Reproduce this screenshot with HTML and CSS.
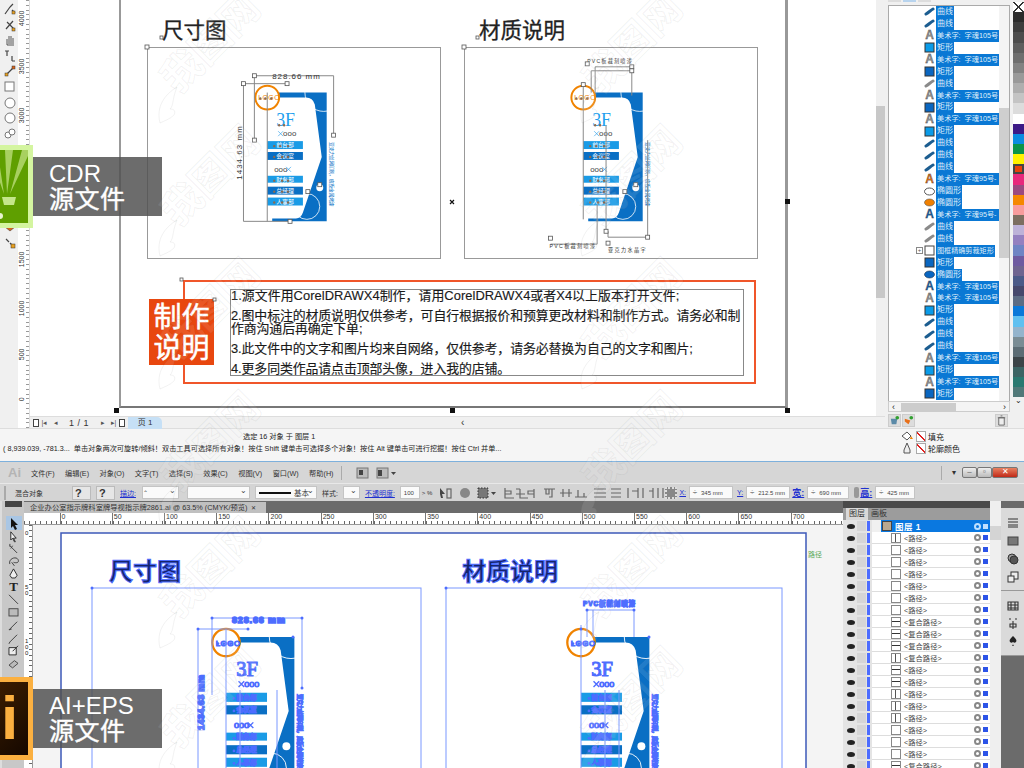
FILE: index.html
```html
<!DOCTYPE html>
<html lang="zh-CN">
<head>
    <meta charset="UTF-8">
    <title>CDR AI 源文件预览</title>
    <link rel="stylesheet" href="styles.css">
</head>
<body>
<svg class="defs" aria-hidden="true">
    <defs>
        <g id="sign">
            <path class="s-blue" d="M272 92H327V222H272V219H296Q301 219 303 213L322 157L315 104Q313 97 306 97H272Z"/>
            <circle class="s-arc" cx="324" cy="92" r="19"/>
            <circle class="s-arc" cx="307" cy="207" r="13"/>
            <circle class="s-dot" cx="320" cy="188" r="3.5"/>
            <circle class="s-ring" cx="267" cy="97" r="12"/>
            <rect class="s-light" x="267" y="141" width="36" height="8"/>
            <rect class="s-dark" x="267" y="152" width="36" height="8"/>
            <rect class="s-light" x="267" y="176" width="36" height="7"/>
            <rect class="s-dark" x="267" y="187" width="36" height="8"/>
            <rect class="s-light" x="267" y="198" width="36" height="8"/>
        </g>
        <g id="sign-text">
            <text class="s-logo" x="258" y="100">LOGO</text>
            <text class="s-3f" x="276" y="126">3F</text>
            <path class="s-x" d="M278 131l5 5m0-5l-5 5M286 167l5 5m0-5l-5 5"/>
            <text class="s-oo" x="283" y="136">ooo</text>
            <text class="s-oo" x="274" y="172">ooo</text>
            <text class="s-bar" x="285" y="147">前台部</text>
            <text class="s-bar" x="285" y="158">会议室</text>
            <text class="s-bar" x="285" y="182">财务部</text>
            <text class="s-bar" x="285" y="193">总经理</text>
            <text class="s-bar" x="285" y="204">人事部</text>
            <text class="s-col" transform="translate(330 142) rotate(90)" textLength="65">亚克力丝网印刷，底板金属烤漆</text>
        </g>
        <g id="sign-nodes">
            <circle cx="274" cy="146" r="1.2"/><circle cx="280" cy="146" r="1.2"/><circle cx="288" cy="146" r="1.2"/>
            <circle cx="274" cy="157" r="1.2"/><circle cx="282" cy="157" r="1.2"/><circle cx="288" cy="157" r="1.2"/>
            <circle cx="274" cy="181" r="1.2"/><circle cx="282" cy="181" r="1.2"/><circle cx="288" cy="181" r="1.2"/>
            <circle cx="274" cy="192" r="1.2"/><circle cx="282" cy="192" r="1.2"/><circle cx="288" cy="192" r="1.2"/>
            <circle cx="274" cy="203" r="1.2"/><circle cx="282" cy="203" r="1.2"/><circle cx="288" cy="203" r="1.2"/>
            <circle cx="260" cy="98" r="1.2"/><circle cx="265" cy="98" r="1.2"/><circle cx="271" cy="98" r="1.2"/>
            <circle cx="279" cy="125" r="1.2"/><circle cx="284" cy="125" r="1.2"/>
        </g>
        <g id="i-curve"><path d="M2 8C4 7 7 4 9 3"/></g>
        <g id="i-rect"><rect x="1" y="1" width="9" height="9"/></g>
        <g id="i-ellipse"><ellipse cx="5.5" cy="5.5" rx="5" ry="3.5"/></g>
        <g id="i-mark">
            <text class="wm-text" x="0" y="0" transform="rotate(-45)">我图网</text>
            <path class="wm-text" d="M-18 28C-22 12-14 0-1-8-6 4-4 10-8 14-4 14-2 16-4 20-8 24-14 26-18 28Z"/>
        </g>
    </defs>
</svg>

<div class="screen">
    <!-- CorelDRAW window -->
    <section class="cdr">
        <div class="cdr-main">
            <div class="toolbox">
                <svg class="tool" viewBox="0 0 14 14"><path d="M2 12L7 5M7 5l3-3M9 8l3 3" class="t-line"/><rect x="9" y="9" width="3" height="3" class="t-fill"/></svg>
                <svg class="tool" viewBox="0 0 14 14"><path d="M3 11L10 3M4 4l7 7" class="t-line"/><rect x="9" y="10" width="3" height="3" class="t-fill"/></svg>
                <svg class="tool" viewBox="0 0 14 14"><path d="M4 12V6M6 11V3M8 11V3M10 11V5M4 12h7" class="t-line thin"/></svg>
                <svg class="tool" viewBox="0 0 14 14"><path d="M2 2h4M4 2v5M9 7v5M9 12h3" class="t-line"/></svg>
                <svg class="tool" viewBox="0 0 14 14"><path d="M3 11L10 4" class="t-line"/><rect x="2" y="9" width="3" height="3" class="t-fill"/><rect x="9" y="2" width="3" height="3" class="t-red"/></svg>
                <svg class="tool" viewBox="0 0 14 14"><rect x="2" y="2" width="9" height="9" class="t-box"/></svg>
                <svg class="tool" viewBox="0 0 14 14"><circle cx="7" cy="7" r="5" class="t-box"/></svg>
                <svg class="tool" viewBox="0 0 14 14"><circle cx="7" cy="7" r="5" class="t-box"/></svg>
                <svg class="tool" viewBox="0 0 14 14"><circle cx="5" cy="8" r="3" class="t-box"/><circle cx="9" cy="5" r="3" class="t-box"/></svg>
                <div class="tool-gap"></div>
                <svg class="tool" viewBox="0 0 14 14"><path d="M7 3l5 4-5 4-5-4z" class="t-red"/></svg>
                <svg class="tool" viewBox="0 0 14 14"><path d="M3 3l3 3M7 7l4 4" class="t-line"/><rect x="8" y="8" width="4" height="4" class="t-fill"/></svg>
            </div>
            <div class="vruler">
                <span>4000</span><span>3500</span><span>3000</span><span></span><span></span><span>1500</span><span>1000</span><span>500</span><span>0</span>
            </div>
            <div class="center">
                <div class="work-row">
                    <div class="workspace">
                        <div class="page">
                            <div class="sheets">
                                <div class="sheet">
                                    <h3 class="sheet-title">尺寸图</h3>
                                    <div class="frame">
                                        <svg viewBox="147 47 294 212" width="292" height="210">
                                            <use href="#sign"/>
                                            <use href="#sign-text"/>
                                            <use href="#sign-nodes" class="nodes-cdr"/>
                                            <path class="guide" d="M254 140V75H334V135M243 222V83H287M243 222H290M267 92V222"/>
                                            <text class="dim" x="272" y="78" textLength="48">828.66 mm</text>
                                            <text class="dim" transform="translate(241 180) rotate(-90)" textLength="54">1434.63 mm</text>
                                            <g class="hd">
                                                <rect x="252" y="73" width="4" height="4"/><rect x="332" y="133" width="4" height="4"/><rect x="252" y="138" width="4" height="4"/>
                                                <rect x="241" y="81" width="4" height="4"/><rect x="285" y="81" width="4" height="4"/><rect x="288" y="220" width="4" height="4"/>
                                                <rect x="306" y="190" width="4" height="4"/><rect x="318" y="183" width="4" height="4"/>
                                            </g>
                                        </svg>
                                    </div>
                                </div>
                                <div class="sheet">
                                    <h3 class="sheet-title">材质说明</h3>
                                    <div class="frame">
                                        <svg viewBox="464 47 294 212" width="292" height="210">
                                            <use href="#sign" x="316"/>
                                            <use href="#sign-text" x="316"/>
                                            <use href="#sign-nodes" x="316" class="nodes-cdr"/>
                                            <path class="guide" d="M595 92V66H632V95M591 92V70H632M583 85V220M606 125V232M597 205V245H550M608 238H648V140M608 232V238"/>
                                            <text class="dim sm" x="587" y="62" textLength="45">PVC板裁刻喷漆</text>
                                            <text class="dim sm" x="549" y="249" textLength="46">PVC板裁刻喷漆</text>
                                            <text class="dim sm" x="608" y="253" textLength="38">亚克力水晶字</text>
                                            <g class="hd">
                                                <rect x="585" y="61" width="4" height="4"/><rect x="630" y="64" width="4" height="4"/><rect x="630" y="68" width="4" height="4"/>
                                                <rect x="581" y="82" width="4" height="4"/><rect x="548" y="237" width="4" height="4"/><rect x="604" y="230" width="4" height="4"/>
                                                <rect x="646" y="236" width="4" height="4"/><rect x="606" y="242" width="4" height="4"/><rect x="623" y="190" width="4" height="4"/><rect x="634" y="183" width="4" height="4"/>
                                            </g>
                                        </svg>
                                    </div>
                                </div>
                            </div>
                            <div class="note">
                                <div class="note-tag">制作<br>说明</div>
                                <div class="note-text">
                                    <p>1.源文件用CorelDRAWX4制作，请用CorelDRAWX4或者X4以上版本打开文件;</p>
                                    <p>2.图中标注的材质说明仅供参考，可自行根据报价和预算更改材料和制作方式。请务必和制<br>作商沟通后再确定下单;</p>
                                    <p>3.此文件中的文字和图片均来自网络，仅供参考，请务必替换为自己的文字和图片;</p>
                                    <p>4.更多同类作品请点击顶部头像，进入我的店铺。</p>
                                </div>
                            </div>
                        </div>
                        <svg class="marks" viewBox="30 0 846 417">
                            <rect class="m-black" x="114" y="408" width="5" height="5"/>
                            <rect class="m-black" x="450" y="408" width="5" height="5"/>
                            <rect class="m-black" x="785" y="408" width="5" height="5"/>
                            <rect class="m-black" x="785" y="199" width="5" height="5"/>
                            <path class="m-x" d="M450 200l4 4m0-4l-4 4"/>
                            <rect class="m-white" x="145" y="45" width="4" height="4"/>
                            <rect class="m-white" x="462" y="45" width="4" height="4"/>
                            <rect class="m-white" x="160" y="36" width="3" height="3"/>
                            <rect class="m-white" x="476" y="36" width="3" height="3"/>
                            <rect class="m-white" x="180" y="278" width="3" height="3"/>
                            <rect class="m-white" x="213" y="298" width="3" height="3"/>
                        </svg>
                    </div>
                    <div class="vscroll"><div class="vthumb"></div></div>
                </div>
                <div class="pagenav">
                    <span class="doc-ico"></span><span class="nav-g">|◂</span><span class="nav-g">◂</span>
                    <span class="page-num">1 / 1</span>
                    <span class="nav-g">▸</span><span class="nav-g">▸|</span><span class="doc-ico"></span>
                    <span class="page-tab">页 1</span>
                    <span class="nav-left">‹</span>
                </div>
            </div>
            <div class="docker">
                <div class="docker-top"><span></span><span class="on"></span><span></span></div>
                <div class="list-wrap">
                    <div class="objlist">
                        <div class="obj"><svg class="oi c-blue"><use href="#i-curve"/></svg><span class="lb">曲线</span></div>
                        <div class="obj"><svg class="oi c-blue"><use href="#i-curve"/></svg><span class="lb">曲线</span></div>
                        <div class="obj"><span class="oa">A</span><span class="lb long">美术字: 字魂105号</span></div>
                        <div class="obj"><svg class="oi r-light"><use href="#i-rect"/></svg><span class="lb">矩形</span></div>
                        <div class="obj"><span class="oa">A</span><span class="lb long">美术字: 字魂105号</span></div>
                        <div class="obj"><svg class="oi r-dark"><use href="#i-rect"/></svg><span class="lb">矩形</span></div>
                        <div class="obj"><svg class="oi c-gray"><use href="#i-curve"/></svg><span class="lb">曲线</span></div>
                        <div class="obj"><span class="oa">A</span><span class="lb long">美术字: 字魂105号</span></div>
                        <div class="obj"><svg class="oi r-dark"><use href="#i-rect"/></svg><span class="lb">矩形</span></div>
                        <div class="obj"><span class="oa">A</span><span class="lb long">美术字: 字魂105号</span></div>
                        <div class="obj"><svg class="oi r-light"><use href="#i-rect"/></svg><span class="lb">矩形</span></div>
                        <div class="obj"><svg class="oi c-blue"><use href="#i-curve"/></svg><span class="lb">曲线</span></div>
                        <div class="obj"><svg class="oi c-blue"><use href="#i-curve"/></svg><span class="lb">曲线</span></div>
                        <div class="obj"><svg class="oi c-blue"><use href="#i-curve"/></svg><span class="lb">曲线</span></div>
                        <div class="obj"><span class="oa a-orange">A</span><span class="lb long">美术字: 字魂95号-</span></div>
                        <div class="obj"><svg class="oi e-white"><use href="#i-ellipse"/></svg><span class="lb">椭圆形</span></div>
                        <div class="obj"><svg class="oi e-orange"><use href="#i-ellipse"/></svg><span class="lb">椭圆形</span></div>
                        <div class="obj"><span class="oa a-blue">A</span><span class="lb long">美术字: 字魂95号-</span></div>
                        <div class="obj"><svg class="oi c-gray"><use href="#i-curve"/></svg><span class="lb">曲线</span></div>
                        <div class="obj"><svg class="oi c-gray"><use href="#i-curve"/></svg><span class="lb">曲线</span></div>
                        <div class="obj"><span class="tree-box">+</span><svg class="oi r-white"><use href="#i-rect"/></svg><span class="lb clip">图框精确剪裁矩形</span></div>
                        <div class="obj"><svg class="oi r-dark"><use href="#i-rect"/></svg><span class="lb">矩形</span></div>
                        <div class="obj"><svg class="oi e-blue"><use href="#i-ellipse"/></svg><span class="lb">椭圆形</span></div>
                        <div class="obj"><span class="oa a-blue">A</span><span class="lb long">美术字: 字魂105号</span></div>
                        <div class="obj"><span class="oa">A</span><span class="lb long">美术字: 字魂105号</span></div>
                        <div class="obj"><svg class="oi r-light"><use href="#i-rect"/></svg><span class="lb">矩形</span></div>
                        <div class="obj"><svg class="oi c-blue"><use href="#i-curve"/></svg><span class="lb">曲线</span></div>
                        <div class="obj"><svg class="oi c-blue"><use href="#i-curve"/></svg><span class="lb">曲线</span></div>
                        <div class="obj"><svg class="oi c-blue"><use href="#i-curve"/></svg><span class="lb">曲线</span></div>
                        <div class="obj"><span class="oa">A</span><span class="lb long">美术字: 字魂105号</span></div>
                        <div class="obj"><svg class="oi r-light"><use href="#i-rect"/></svg><span class="lb">矩形</span></div>
                        <div class="obj"><span class="oa">A</span><span class="lb long">美术字: 字魂105号</span></div>
                        <div class="obj"><svg class="oi r-dark"><use href="#i-rect"/></svg><span class="lb">矩形</span></div>
                    </div>
                    <div class="list-scroll"><div class="list-thumb"></div></div>
                </div>
                <div class="list-hscroll"><span>‹</span><div class="list-hthumb"></div><span>›</span></div>
                <div class="docker-btns">
                    <span class="d-btn"><svg viewBox="0 0 12 12"><path class="b-layer" d="M2 4h7l-1 6H3z"/><circle class="b-green" cx="9" cy="3" r="2"/></svg></span>
                    <span class="d-btn"><svg viewBox="0 0 12 12"><path class="b-orange" d="M2 4l6 2-2 4-4-3z"/><circle class="b-green" cx="9" cy="3" r="2"/></svg></span>
                    <span class="d-btn trash"><svg viewBox="0 0 12 12"><path class="b-trash" d="M3 3h6v8H3zM2 3h8M5 1h2"/></svg></span>
                </div>
            </div>
            <div class="palette">
                <div class="sw no"></div>
                <div class="sw"></div><div class="sw"></div><div class="sw"></div><div class="sw"></div><div class="sw"></div><div class="sw"></div><div class="sw"></div><div class="sw"></div><div class="sw"></div><div class="sw"></div>
                <div class="sw"></div><div class="sw"></div><div class="sw"></div><div class="sw"></div><div class="sw"></div><div class="sw"></div><div class="sw"></div><div class="sw"></div><div class="sw"></div><div class="sw"></div>
                <div class="sw"></div><div class="sw"></div><div class="sw"></div><div class="sw"></div><div class="sw"></div><div class="sw"></div><div class="sw"></div><div class="sw"></div><div class="sw"></div><div class="sw"></div>
                <div class="sw"></div><div class="sw"></div><div class="sw"></div><div class="sw"></div><div class="sw"></div><div class="sw"></div><div class="sw"></div><div class="sw"></div>
                <div class="pal-arrow">⌄</div>
            </div>
        </div>
        <div class="cdr-status">
            <div class="status-text">
                <div class="st-sel">选定 16 对象 于 图层 1</div>
                <div class="st-long">( 8,939.039, -781.3...&nbsp; 单击对象两次可旋转/倾斜！双击工具可选择所有对象！按住 Shift 键单击可选择多个对象！按住 Alt 键单击可进行挖掘！按住 Ctrl 并单...</div>
            </div>
            <div class="fill-info">
                <div class="fi-row"><svg class="fi-ico" viewBox="0 0 14 12"><path class="fi-b" d="M2 6l5-4 4 4-4 4z"/><path class="fi-o" d="M11 6l2 3h-3z"/></svg><span class="none-box"></span><span>填充</span></div>
                <div class="fi-row"><svg class="fi-ico" viewBox="0 0 14 12"><path class="fi-p" d="M7 1l3 7v3H4V8z"/></svg><span class="none-box"></span><span>轮廓颜色</span></div>
            </div>
        </div>
    </section>

    <!-- Illustrator window -->
    <section class="ai">
        <div class="ai-menu">
            <span class="ai-mark">Ai</span>
            <nav class="menu-items">
                <span>文件(F)</span><span>编辑(E)</span><span>对象(O)</span><span>文字(T)</span><span>选择(S)</span><span>效果(C)</span><span>视图(V)</span><span>窗口(W)</span><span>帮助(H)</span>
            </nav>
            <i class="sep"></i>
            <svg class="menu-ico" viewBox="0 0 14 12"><rect x="1" y="1" width="11" height="10" class="mi-box"/><rect x="3" y="3" width="4" height="5" class="mi-dark"/></svg>
            <svg class="menu-ico arrange" viewBox="0 0 20 12"><rect x="1" y="1" width="11" height="10" class="mi-box"/><rect x="2" y="3" width="4" height="6" class="mi-dark"/><path class="mi-dark" d="M15 5h5l-2.500 3z"/></svg>
            <i class="sep right"></i>
            <span class="win-tri">▾</span>
            <div class="win-btns"><span class="wb">–</span><span class="wb">▫</span><span class="wb close">✕</span></div>
        </div>
        <div class="ai-ctrl">
            <span class="grip"></span>
            <span class="c-lab first">混合对象</span>
            <span class="dd q">?</span><span class="dd q">?</span>
            <span class="c-link">描边:</span>
            <span class="c-field w37">⌃<b>⌄</b></span>
            <span class="c-field w63"><b>⌄</b></span>
            <span class="c-field w62"><i class="stroke-line"></i><em>基本</em><b>⌄</b></span>
            <span class="c-lab">样式:</span>
            <span class="c-field w17"><b>⌄</b></span>
            <span class="c-link">不透明度:</span>
            <span class="c-field w20 num">100</span><span class="c-lab small">&gt; %</span>
            <svg class="ctrl-icons" viewBox="0 0 65 14">
                <path class="ci-dark" d="M3 2l5 6-3 0 1 4-2 0-1-4z"/><rect class="ci-line" x="10" y="3" width="4" height="9"/>
                <circle class="ci-gray" cx="28" cy="7" r="5"/>
                <rect class="ci-dots" x="41" y="2" width="10" height="10"/><path class="ci-dark" d="M54 6h5l-2.500 3z"/>
            </svg>
            <svg class="align-icons" viewBox="0 0 162 14">
                <path class="ci-line" d="M3 2v10h9M3 5h6v3H3M14 3h4M18 3v9h8M14 8h9M32 3v9M32 5h-6v3h6M42 3h11M47 3v5h-3v-5M50 3v8h-3M58 7h12M61 3v8M67 3v8M73 11h12M76 4v7M82 7v4M92 3h12M92 7h12M92 11h12M109 3h10M109 7h10M109 11h10M126 2v10M130 5h6M136 2v10M141 2v10M147 5h4M151 2v10M156 2v10M161 2v10"/>
            </svg>
            <span class="refpt"></span>
            <span class="c-link xy">X:</span><span class="c-field w44"><u>÷</u>345 mm</span>
            <span class="c-link xy">Y:</span><span class="c-field w44"><u>÷</u>212.5 mm</span>
            <span class="c-link big">宽:</span><span class="c-field w42"><u>÷</u>690 mm</span>
            <span class="c-chain"></span>
            <span class="c-link big last">高:</span><span class="c-field w40"><u>÷</u>425 mm</span>
        </div>
        <div class="ai-body">
            <div class="ai-tools">
                <div class="ai-grip"></div>
                <svg class="at sel" viewBox="0 0 14 14"><path class="at-k" d="M4 2l7 7-3 0 2 4-2 1-2-4-2 2z"/></svg>
                <svg class="at" viewBox="0 0 14 14"><path class="at-o" d="M4 2l6 7-3 0 2 4-1 0-2-4-2 2z"/></svg>
                <svg class="at" viewBox="0 0 14 14"><path class="at-l" d="M3 3l8 8M4 6l2-3M3 1v3"/></svg>
                <svg class="at" viewBox="0 0 14 14"><path class="at-l" d="M3 10C1 4 10 1 12 5S9 9 7 8M5 8l3 4"/></svg>
                <svg class="at" viewBox="0 0 14 14"><path class="at-o" d="M7 1l4 7-2 3H5L3 8z"/></svg>
                <span class="at at-t">T</span>
                <svg class="at" viewBox="0 0 14 14"><path class="at-l" d="M2 2l10 10"/></svg>
                <svg class="at" viewBox="0 0 14 14"><rect class="at-g" x="2" y="3" width="10" height="8"/></svg>
                <svg class="at" viewBox="0 0 14 14"><path class="at-l" d="M2 12L11 3M2 12l3-1"/></svg>
                <svg class="at" viewBox="0 0 14 14"><path class="at-l" d="M3 11L11 3M3 11l-1 2"/></svg>
                <svg class="at" viewBox="0 0 14 14"><path class="at-o" d="M2 4h8v8H2zM6 8l6-6"/></svg>
                <svg class="at" viewBox="0 0 14 14"><path class="at-g" d="M2 9l6-5 4 3-6 5z"/></svg>
            </div>
            <div class="ai-doc">
                <div class="ai-tabbar"><div class="ai-tab">企业办公室指示牌科室牌导视指示牌2861.ai @ 63.5% (CMYK/预览)<i>✕</i></div></div>
                <div class="ai-hruler">
                    <div class="hr-pad"></div>
                    <span>0</span><span>50</span><span>100</span><span>150</span><span>200</span><span>250</span><span>300</span><span>350</span><span>400</span><span>450</span><span>500</span><span>550</span><span>600</span><span>650</span><span>700</span>
                </div>
                <div class="ai-work">
                    <div class="ai-vruler"><span>0</span><span>5<br>0</span><span>1<br>0<br>0</span></div>
                    <svg class="ai-canvas" viewBox="33 525 809 243" width="809" height="243">
                        <rect class="ai-page" x="61" y="533" width="745" height="260"/>
                        <rect class="ai-frame" x="92" y="588" width="329" height="200"/>
                        <rect class="ai-frame" x="446" y="588" width="336" height="200"/>
                        <text class="ai-title" x="109" y="580">尺寸图</text>
                        <text class="ai-title" x="462" y="580">材质说明</text>
                        <text class="ai-green" x="808" y="557">路径</text>

                        <g class="txt-ai" transform="translate(-78.400 532) scale(1.14)">
                            <use href="#sign"/>
                            <use href="#sign-text"/>
                            <use href="#sign-nodes" class="nodes-ai"/>
                        </g>
                        <path class="ai-guide" d="M198 768V629H248M212 695V618H302V688M226 629V768M240 690V768M277 690V768"/>
                        <text class="ai-dim" x="232" y="623" textLength="53">828.66 mm</text>
                        <text class="ai-dim" transform="translate(204 730) rotate(-90)" textLength="55">1434.63 mm</text>
                        <g class="ai-pts">
                            <circle cx="92" cy="588" r="1.500"/><circle cx="446" cy="588" r="1.500"/><circle cx="212" cy="618" r="1.500"/><circle cx="302" cy="618" r="1.500"/>
                            <circle cx="198" cy="629" r="1.500"/><circle cx="248" cy="629" r="1.500"/><circle cx="293" cy="637" r="1.500"/><circle cx="302" cy="688" r="1.500"/>
                        </g>

                        <g class="txt-ai" transform="translate(276.600 532) scale(1.14)">
                            <use href="#sign"/>
                            <use href="#sign-text"/>
                            <use href="#sign-nodes" class="nodes-ai"/>
                        </g>
                        <path class="ai-guide" d="M587 637V610H634V637M593 637V610M581 625V768M605 690V768M619 690V768"/>
                        <text class="ai-dim sm" x="583" y="606" textLength="52">PVC板裁刻喷漆</text>
                        <g class="ai-pts">
                            <circle cx="581" cy="629" r="1.500"/><circle cx="649" cy="637" r="1.500"/><circle cx="634" cy="610" r="1.500"/><circle cx="587" cy="610" r="1.500"/>
                        </g>
                    </svg>
                </div>
            </div>
            <div class="ai-panel">
                <div class="panel-head"></div>
                <div class="panel-tabs"><span class="on">图层</span><span>画板</span></div>
                <div class="layers">
                    <div class="lrow top"><i class="eye"></i><i class="vbox"></i><i class="vbar"></i><div class="lcell"><div class="ltop"><i class="thumb pic"></i>图层 1<i class="tgt white"></i><i class="sq white"></i></div></div></div>
                    <div class="lrow"><i class="eye"></i><i class="vbox"></i><i class="vbar"></i><div class="lcell"><i class="thumb v"></i><span>&lt;路径&gt;</span><i class="tgt"></i><i class="sq"></i></div></div>
                    <div class="lrow"><i class="eye"></i><i class="vbox"></i><i class="vbar"></i><div class="lcell"><i class="thumb"></i><span>&lt;路径&gt;</span><i class="tgt"></i><i class="sq"></i></div></div>
                    <div class="lrow"><i class="eye"></i><i class="vbox"></i><i class="vbar"></i><div class="lcell"><i class="thumb"></i><span>&lt;路径&gt;</span><i class="tgt"></i><i class="sq"></i></div></div>
                    <div class="lrow"><i class="eye"></i><i class="vbox"></i><i class="vbar"></i><div class="lcell"><i class="thumb"></i><span>&lt;路径&gt;</span><i class="tgt"></i><i class="sq"></i></div></div>
                    <div class="lrow"><i class="eye"></i><i class="vbox"></i><i class="vbar"></i><div class="lcell"><i class="thumb"></i><span>&lt;路径&gt;</span><i class="tgt"></i><i class="sq"></i></div></div>
                    <div class="lrow"><i class="eye"></i><i class="vbox"></i><i class="vbar"></i><div class="lcell"><i class="thumb"></i><span>&lt;路径&gt;</span><i class="tgt"></i><i class="sq"></i></div></div>
                    <div class="lrow"><i class="eye"></i><i class="vbox"></i><i class="vbar"></i><div class="lcell"><i class="thumb"></i><span>&lt;路径&gt;</span><i class="tgt"></i><i class="sq"></i></div></div>
                    <div class="lrow"><i class="eye"></i><i class="vbox"></i><i class="vbar"></i><div class="lcell"><i class="thumb h"></i><span>&lt;复合路径&gt;</span><i class="tgt"></i><i class="sq"></i></div></div>
                    <div class="lrow"><i class="eye"></i><i class="vbox"></i><i class="vbar"></i><div class="lcell"><i class="thumb h"></i><span>&lt;复合路径&gt;</span><i class="tgt"></i><i class="sq"></i></div></div>
                    <div class="lrow"><i class="eye"></i><i class="vbox"></i><i class="vbar"></i><div class="lcell"><i class="thumb h"></i><span>&lt;复合路径&gt;</span><i class="tgt"></i><i class="sq"></i></div></div>
                    <div class="lrow"><i class="eye"></i><i class="vbox"></i><i class="vbar"></i><div class="lcell"><i class="thumb v"></i><span>&lt;复合路径&gt;</span><i class="tgt"></i><i class="sq"></i></div></div>
                    <div class="lrow"><i class="eye"></i><i class="vbox"></i><i class="vbar"></i><div class="lcell"><i class="thumb h"></i><span>&lt;路径&gt;</span><i class="tgt"></i><i class="sq"></i></div></div>
                    <div class="lrow"><i class="eye"></i><i class="vbox"></i><i class="vbar"></i><div class="lcell"><i class="thumb h"></i><span>&lt;路径&gt;</span><i class="tgt"></i><i class="sq"></i></div></div>
                    <div class="lrow"><i class="eye"></i><i class="vbox"></i><i class="vbar"></i><div class="lcell"><i class="thumb v"></i><span>&lt;路径&gt;</span><i class="tgt"></i><i class="sq"></i></div></div>
                    <div class="lrow"><i class="eye"></i><i class="vbox"></i><i class="vbar"></i><div class="lcell"><i class="thumb v"></i><span>&lt;路径&gt;</span><i class="tgt"></i><i class="sq"></i></div></div>
                    <div class="lrow"><i class="eye"></i><i class="vbox"></i><i class="vbar"></i><div class="lcell"><i class="thumb v"></i><span>&lt;路径&gt;</span><i class="tgt"></i><i class="sq"></i></div></div>
                    <div class="lrow"><i class="eye"></i><i class="vbox"></i><i class="vbar"></i><div class="lcell"><i class="thumb"></i><span>&lt;路径&gt;</span><i class="tgt"></i><i class="sq"></i></div></div>
                    <div class="lrow"><i class="eye"></i><i class="vbox"></i><i class="vbar"></i><div class="lcell"><i class="thumb"></i><span>&lt;路径&gt;</span><i class="tgt"></i><i class="sq"></i></div></div>
                    <div class="lrow"><i class="eye"></i><i class="vbox"></i><i class="vbar"></i><div class="lcell"><i class="thumb"></i><span>&lt;路径&gt;</span><i class="tgt"></i><i class="sq"></i></div></div>
                    <div class="lrow"><i class="eye"></i><i class="vbox"></i><i class="vbar"></i><div class="lcell"><i class="thumb h"></i><span>&lt;复合路径&gt;</span><i class="tgt"></i><i class="sq"></i></div></div>
                </div>
            </div>
            <div class="ai-lscroll"><div class="ai-lthumb"></div></div>
            <div class="ai-strip">
                <div class="strip-group">
                    <svg viewBox="0 0 14 14"><path class="st-l" d="M2 3h10M2 6h10M2 9h10M2 11h10"/></svg>
                    <svg viewBox="0 0 14 14"><rect class="st-grad" x="2" y="3" width="10" height="8"/></svg>
                    <svg viewBox="0 0 14 14"><circle class="st-c" cx="6" cy="6" r="4"/><circle class="st-c2" cx="8" cy="8" r="4"/></svg>
                    <svg viewBox="0 0 14 14"><rect class="st-w" x="5" y="2" width="7" height="7"/><rect class="st-w" x="2" y="6" width="6" height="6"/></svg>
                </div>
                <div class="strip-group">
                    <svg viewBox="0 0 14 14"><path class="st-l" d="M2 3h10v8H2zM2 6h10M2 9h10M5 3v8M9 3v8"/></svg>
                    <svg viewBox="0 0 14 14"><path class="st-l" d="M3 2h2M9 2h2M7 4v8M4 7h6v3H4z"/></svg>
                    <svg viewBox="0 0 14 14"><path class="st-k" d="M7 1c3 3 4 4 3 6-1 1-2 1-3 0 0 2 0 3 1 4H6c1-1 1-2 1-4-1 1-2 1-3 0-1-2 0-3 3-6z"/></svg>
                </div>
            </div>
        </div>
    </section>

    <!-- preview badges over the screenshots -->
    <div class="badge badge-cdr">
        <div class="b-logo logo-cdr">
            <svg viewBox="0 0 28 73" width="28" height="73">
                <path class="ray" d="M4 44L-10 4H-2ZM7 44L5 0H13ZM10 44L22 0H28V6Z"/>
                <path class="ray-b" d="M2 47H16L14 55H4Z"/>
                <circle class="ray-w" cx="0" cy="66" r="3"/>
            </svg>
        </div>
        <div class="b-label"><strong>CDR</strong><span>源文件</span></div>
    </div>
    <div class="badge badge-ai">
        <div class="b-logo logo-ai">i</div>
        <div class="b-label"><strong>AI+EPS</strong><span>源文件</span></div>
    </div>

    <svg class="watermarks" viewBox="0 0 1024 768">
        <use href="#i-mark" x="178" y="95"/><use href="#i-mark" x="600" y="95"/>
        <use href="#i-mark" x="178" y="228"/><use href="#i-mark" x="600" y="228"/>
        <use href="#i-mark" x="178" y="361"/><use href="#i-mark" x="600" y="361"/>
        <use href="#i-mark" x="178" y="494"/><use href="#i-mark" x="600" y="494"/>
        <use href="#i-mark" x="178" y="620"/><use href="#i-mark" x="600" y="620"/>
        <use href="#i-mark" x="178" y="750"/><use href="#i-mark" x="600" y="750"/>
    </svg>
</div>
</body>
</html>
```
FILE: styles.css
```css
* {
    box-sizing: border-box;
}
html, body {
    margin: 0;
    padding: 0;
    background: #fff;
}
body {
    font-family: "Liberation Sans", "Noto Sans CJK SC", sans-serif;
    color: #222;
}
.defs {
    position: absolute;
    width: 0;
    height: 0;
}
.screen {
    position: relative;
    width: 1024px;
    height: 768px;
    overflow: hidden;
}

/* ---------- CorelDRAW ---------- */
.cdr {
    height: 461px;
    background: #f2f2f2;
}
.cdr-main {
    display: flex;
    height: 428px;
}
.toolbox {
    width: 18px;
    padding: 2px 0 0 3px;
    display: flex;
    flex-direction: column;
    background: #f0f0f0;
}
.tool {
    width: 14px;
    height: 14px;
    margin-bottom: 1.6px;
    flex: none;
}
.tool-gap {
    height: 78px;
    flex: none;
}
.t-line { fill: none; stroke: #444; stroke-width: 1.2; }
.t-line.thin { stroke-width: .9; }
.t-fill { fill: #e8a020; stroke: #333; stroke-width: .5; }
.t-red { fill: #d8641a; stroke: #333; stroke-width: .5; }
.t-box { fill: #fff; stroke: #777; stroke-width: 1; }

.vruler {
    width: 12px;
    padding-top: 11px;
    background: #fff repeating-linear-gradient(to bottom, #999 0 1px, transparent 1px 4.8px) right top / 3px 100% no-repeat;
    border-right: 1px solid #ddd;
    overflow: hidden;
}
.vruler span {
    display: block;
    height: 48.25px;
    writing-mode: vertical-rl;
    transform: rotate(180deg);
    font-size: 7px;
    line-height: 8px;
    color: #333;
    text-align: right;
}
.center {
    width: 855px;
    display: flex;
    flex-direction: column;
}
.work-row {
    display: flex;
    height: 416px;
}
.workspace {
    position: relative;
    width: 846px;
    background: #fff;
    overflow: hidden;
}
.page {
    width: 669px;
    height: 408px;
    margin-left: 89px;
    padding: 20px 0 0 26px;
    background: #fff;
    border-left: 2px solid #999;
    border-right: 3px solid #999;
    border-bottom: 2px solid #777;
}
.sheets {
    display: grid;
    grid-template-columns: 294px 294px;
    column-gap: 23px;
}
.sheet-title {
    margin: 0 0 0 15px;
    height: 27px;
    font-weight: normal;
    font-size: 21.500px;
    line-height: 22px;
    color: #222;
    -webkit-text-stroke: .3px #222;
}
.frame {
    width: 294px;
    height: 212px;
    border: 1px solid #999;
}
.frame svg {
    display: block;
}
.s-blue { fill: #0a6fc4; }
.s-arc { fill: none; stroke: #fff; stroke-width: .8; }
.s-dot { fill: #fff; }
.s-ring { fill: #fff; stroke: #f08300; stroke-width: 2; }
.s-light { fill: #1a9be6; }
.s-dark { fill: #0a6fc4; }
/* the Illustrator copy of the sign swaps these to selection blue */
.s-logo { font-size: 7px; fill: var(--tf, #f08300); stroke: var(--ts, none); stroke-width: var(--sw, 0); letter-spacing: .4px; }
.s-3f { font-family: "Liberation Serif", serif; font-size: 18px; fill: var(--tf, #1ea0ee); stroke: var(--ts, none); stroke-width: var(--sw, 0); }
.s-x { fill: none; stroke: var(--ts, #3aa4ea); stroke-width: var(--swx, .7); }
.s-oo { font-size: 8px; fill: var(--tf, #444); stroke: var(--ts, none); stroke-width: var(--sw, 0); }
.s-bar { font-size: 6px; fill: var(--tf, #fff); stroke: var(--ts, none); stroke-width: var(--sw, 0); text-anchor: middle; }
.s-col { font-size: 5px; fill: var(--tf, #0a6fc4); stroke: var(--ts, none); stroke-width: var(--sw, 0); }
.guide { fill: none; stroke: #888; stroke-width: 1; }
.dim { font-size: 8px; fill: #333; }
.dim.sm { font-size: 5.200px; }
.hd rect { fill: #fff; stroke: #555; stroke-width: .8; }
.nodes-cdr { fill: #8a6a50; }

.note {
    position: relative;
    width: 573px;
    height: 104px;
    margin: 21px 0 0 36px;
    padding: 7px 0 0 45px;
    border: 2px solid #f0562a;
}
.note-tag {
    position: absolute;
    left: -36px;
    top: 17px;
    width: 65px;
    height: 66px;
    background: #e8470f;
    color: #fff;
    font-size: 28px;
    line-height: 31px;
    text-align: center;
    padding-top: 3px;
    -webkit-text-stroke: .5px #fff;
}
.note-text {
    width: 514px;
    height: 87px;
    border: 1px solid #888;
    font-size: 12.900px;
    line-height: 13px;
    white-space: nowrap;
    letter-spacing: -.1px;
    color: #1a1a1a;
    -webkit-text-stroke: .15px #1a1a1a;
    overflow: hidden;
}
.note-text p {
    margin: 0 0 7px;
}
.note-text p:first-child {
    margin-top: -1px;
    letter-spacing: .05px;
}
.marks {
    position: absolute;
    left: 0;
    top: 0;
    width: 846px;
    height: 417px;
}
.m-black { fill: #111; }
.m-white { fill: #fff; stroke: #555; stroke-width: .8; }
.m-x { fill: none; stroke: #111; stroke-width: 1.2; }
.vscroll {
    width: 9px;
    background: #f0f0f0;
    padding-top: 106px;
}
.vthumb {
    height: 192px;
    background: #c8c8c8;
}
.pagenav {
    height: 12px;
    display: flex;
    align-items: center;
    background: #f0f0f0;
    font-size: 8px;
    color: #333;
    padding-left: 3px;
    border-top: 1px solid #ddd;
}
.doc-ico {
    width: 6px;
    height: 8px;
    border: 1px solid #444;
    background: #fff;
    flex: none;
}
.nav-g {
    width: 11px;
    text-align: center;
    font-size: 7px;
    color: #555;
    flex: none;
}
.page-num {
    width: 36px;
    text-align: center;
    font-size: 9px;
    letter-spacing: .5px;
}
.page-tab {
    width: 34px;
    height: 12px;
    margin-left: 3px;
    background: #c6e0f6;
    text-align: center;
    font-size: 8px;
    line-height: 11px;
    border-radius: 0 5px 0 0;
}
.nav-left {
    margin-left: 299px;
    font-size: 10px;
    line-height: 10px;
}
.docker {
    width: 128px;
    padding-left: 3px;
    background: #f0f0f0;
    display: flex;
    flex-direction: column;
}
.docker-top {
    height: 5px;
    display: flex;
    gap: 2px;
    overflow: hidden;
}
.docker-top span {
    width: 13px;
    height: 2px;
    background: #ddd;
}
.docker-top .on {
    background: #b8d4ee;
}
.list-wrap {
    display: flex;
    height: 396px;
    border: 1px solid #aaa;
    border-bottom: 0;
    width: 122px;
}
.objlist {
    width: 111px;
    background: #fff;
    overflow: hidden;
}
.obj {
    height: 11.940px;
    display: flex;
    align-items: center;
    justify-content: flex-start;
    padding-left: 35px;
    position: relative;
    font-size: 8px;
    white-space: nowrap;
}
.oi {
    width: 11px;
    height: 11px;
    flex: none;
    margin-right: 1px;
}
.c-blue { fill: none; stroke: #1c5d90; stroke-width: 3; stroke-linecap: round; }
.c-gray { fill: none; stroke: #8a8a8a; stroke-width: 3; stroke-linecap: round; }
.r-light { fill: #0a9be8; stroke: #333; stroke-width: 1; }
.r-dark { fill: #0a66c0; stroke: #333; stroke-width: 1; }
.r-white { fill: #fff; stroke: #444; stroke-width: 1; }
.e-white { fill: #fff; stroke: #555; stroke-width: 1; }
.e-orange { fill: #f08000; stroke: #555; stroke-width: .6; }
.e-blue { fill: #0a66c0; stroke: #234; stroke-width: .6; }
.oa {
    width: 11px;
    height: 11px;
    margin-right: 1px;
    flex: none;
    text-align: center;
    font-size: 12px;
    line-height: 11px;
    font-weight: bold;
    color: #8d8d8d;
    -webkit-text-stroke: .3px #444;
}
.a-orange { color: #d86a10; }
.a-blue { color: #155a9c; }
.lb {
    background: #0a78d4;
    color: #dfeefa;
    height: 12px;
    line-height: 12px;
    padding: 0 1px;
}
.long {
    flex: 1;
    font-size: 7.200px;
    word-spacing: 2px;
}
.clip {
    font-size: 7.100px;
}
.tree-box {
    position: absolute;
    left: 27px;
    width: 7px;
    height: 7px;
    top: 2px;
    border: 1px solid #888;
    font-size: 6px;
    line-height: 5px;
    text-align: center;
    color: #555;
}
.list-scroll {
    width: 10px;
    background: #f4f4f4;
    padding-top: 102px;
}
.list-thumb {
    height: 150px;
    background: #cfcfcf;
}
.list-hscroll {
    width: 122px;
    height: 11px;
    background: #f4f4f4;
    border: 1px solid #ccc;
    display: flex;
    align-items: center;
    justify-content: space-between;
    font-size: 9px;
    line-height: 8px;
    padding: 0 3px;
}
.list-hthumb {
    width: 55px;
    height: 8px;
    margin-right: 42px;
    background: #ccc;
}
.docker-btns {
    display: flex;
    padding-top: 2px;
    gap: 1px;
    width: 122px;
}
.d-btn {
    width: 13px;
    height: 13px;
    background: #ddd;
    border: 1px solid #ccc;
}
.d-btn.trash {
    margin-left: auto;
    margin-right: 2px;
}
.d-btn svg {
    display: block;
}
.b-layer { fill: #5b8aa8; }
.b-orange { fill: #e8701a; }
.b-green { fill: #30a030; }
.b-trash { fill: #eee; stroke: #666; stroke-width: 1; }
.palette {
    width: 11px;
    padding-top: 2px;
    background: #f0f0f0;
}
.sw {
    height: 10.150px;
}
.sw.no {
    background: linear-gradient(45deg, transparent 44%, #333 44% 56%, transparent 56%), linear-gradient(-45deg, #fff 44%, #333 44% 56%, #fff 56%);
}
.pal-arrow {
    font-size: 8px;
    line-height: 8px;
    text-align: center;
}
.sw:nth-child(2) { background: #2b2b2b; }
.sw:nth-child(3) { background: #3d3d3d; }
.sw:nth-child(4) { background: #4d4d4d; }
.sw:nth-child(5) { background: #5e5e5e; }
.sw:nth-child(6) { background: #6e6e6e; }
.sw:nth-child(7) { background: #828282; }
.sw:nth-child(8) { background: #999; }
.sw:nth-child(9) { background: #aeaeae; }
.sw:nth-child(10) { background: #c4c4c4; }
.sw:nth-child(11) { background: #dcdcdc; }
.sw:nth-child(12) { background: #fff; }
.sw:nth-child(13) { background: #3c1a86; }
.sw:nth-child(14) { background: #0a8ce0; }
.sw:nth-child(15) { background: #0a9448; }
.sw:nth-child(16) { background: #fff200; }
.sw:nth-child(17) { background: #e8400c; border: 2px solid #444; }
.sw:nth-child(18) { background: #e8287c; }
.sw:nth-child(19) { background: #9b4a80; }
.sw:nth-child(20) { background: #f58800; }
.sw:nth-child(21) { background: #f89c9c; }
.sw:nth-child(22) { background: #7c6e60; }
.sw:nth-child(23) { background: #bdb2d8; }
.sw:nth-child(24) { background: #9480c0; }
.sw:nth-child(25) { background: #6f84c4; }
.sw:nth-child(26) { background: #6e5aa0; }
.sw:nth-child(27) { background: #6f6490; }
.sw:nth-child(28) { background: #4b5a88; }
.sw:nth-child(29) { background: #46486c; }
.sw:nth-child(30) { background: #5c6c84; }
.sw:nth-child(31) { background: #0a78d8; }
.sw:nth-child(32) { background: #60c0f0; }
.sw:nth-child(33) { background: #94b4cc; }
.sw:nth-child(34) { background: #7a8c94; }
.sw:nth-child(35) { background: #5c6c74; }
.sw:nth-child(36) { background: #3c4448; }
.sw:nth-child(37) { background: #3c6464; }
.sw:nth-child(38) { background: #2a7870; }
.sw:nth-child(39) { background: #507878; }

.cdr-status {
    height: 33px;
    display: flex;
    background: #f5f5f5;
    border-top: 1px solid #ddd;
}
.status-text {
    width: 900px;
    font-size: 7.200px;
    line-height: 12px;
    padding-left: 3px;
    white-space: nowrap;
}
.st-sel {
    padding: 2px 0 0 240px;
}
.fill-info {
    font-size: 8px;
    padding-top: 1px;
}
.fi-row {
    display: flex;
    align-items: center;
    height: 12px;
    gap: 2px;
}
.fi-ico {
    width: 14px;
    height: 12px;
}
.fi-b { fill: #fff; stroke: #555; }
.fi-o { fill: #f08000; }
.fi-p { fill: #eee; stroke: #555; }
.none-box {
    width: 10px;
    height: 11px;
    border: 1px solid #aaa;
    background: linear-gradient(45deg, #fff 46%, #e02020 46% 56%, #fff 56%);
}

/* ---------- Illustrator ---------- */
.ai {
    height: 307px;
    background: #d4d4d4;
    border-top: 1px solid #7db0dc;
}
.ai-menu {
    height: 21px;
    display: flex;
    align-items: center;
    font-size: 7.200px;
    color: #333;
    background: #d6d6d6;
    padding-left: 8px;
}
.ai-mark {
    width: 23px;
    font-size: 13px;
    color: #b4b4b4;
    font-weight: bold;
}
.menu-items {
    display: flex;
    gap: 10.500px;
}
.sep {
    width: 1px;
    height: 14px;
    background: #aaa;
    margin: 0 8px;
}
.sep.right {
    margin: 0 10px 0 auto;
}
.menu-ico {
    width: 14px;
    height: 12px;
    margin: 0 6px;
}
.menu-ico.arrange {
    width: 20px;
    margin-left: 0;
}
.mi-box { fill: #bbb; stroke: #777; }
.mi-dark { fill: #444; }
.win-tri {
    font-size: 8px;
    width: 10px;
}
.win-btns {
    display: flex;
    margin-right: 6px;
}
.wb {
    width: 15px;
    height: 11px;
    border: 1px solid #777;
    border-radius: 2px;
    background: linear-gradient(#eee, #bbb);
    font-size: 8px;
    line-height: 8px;
    text-align: center;
    color: #555;
}
.wb.close {
    width: 26px;
    background: linear-gradient(#e88060, #c02a18);
    color: #fff;
}
.ai-ctrl {
    height: 18px;
    display: flex;
    align-items: center;
    gap: 5px;
    font-size: 7px;
    color: #333;
    padding-left: 4px;
    background: #d4d4d4;
    border-top: 1px solid #e8e8e8;
    white-space: nowrap;
}
.grip {
    width: 2px;
    height: 14px;
    background: #aaa;
    margin-right: 4px;
}
.c-lab.first {
    width: 52px;
}
.c-lab.small {
    font-size: 6px;
    margin-left: -3px;
}
.dd {
    width: 19px;
    height: 14px;
    background: #e6e6e6;
    border: 1px solid #bbb;
    font-size: 11px;
    line-height: 12px;
    font-weight: bold;
    padding-left: 2px;
}
.c-link {
    color: #2030d0;
    text-decoration: underline;
}
.c-field {
    height: 13px;
    display: flex;
    align-items: center;
    background: #fafafa;
    border: 1px solid #c4c4c4;
    position: relative;
    font-size: 6px;
    color: #444;
    flex: none;
}
.c-field b {
    position: absolute;
    right: 2px;
    top: -2px;
    font-weight: normal;
    font-size: 8px;
    line-height: 12px;
}
.c-field u {
    text-decoration: none;
    font-size: 8px;
    width: 10px;
    text-align: center;
    color: #333;
    margin-right: 1px;
}
.c-field em {
    font-style: normal;
    font-size: 7.500px;
    margin-left: 3px;
}
.w17 { width: 17px; }
.w20 { width: 20px; }
.w37 { width: 37px; margin-left: 1px; }
.w40 { width: 40px; }
.w42 { width: 42px; }
.w44 { width: 44px; }
.w62 { width: 62px; }
.w63 { width: 63px; margin-left: 3px; }
.num { padding-left: 3px; }
.stroke-line {
    width: 32px;
    height: 2px;
    margin-left: 3px;
    background: #111;
}
.ctrl-icons {
    width: 65px;
    height: 14px;
    flex: none;
}
.align-icons {
    width: 162px;
    height: 14px;
    flex: none;
    margin-left: -5px;
}
.ci-dark { fill: #444; }
.ci-line { fill: none; stroke: #666; stroke-width: 1.2; }
.ci-gray { fill: #888; }
.ci-dots { fill: #777; stroke: #333; stroke-dasharray: 1.500; }
.refpt {
    width: 12px;
    height: 12px;
    background: #888;
    border: 2px dotted #ddd;
    flex: none;
    margin-left: -4px;
}
.c-link.xy {
    font-size: 7px;
    margin-left: -3px;
    margin-right: -2px;
}
.c-link.xy + .c-field + .c-link.xy {
    margin-left: -1px;
}
.c-link.big {
    font-size: 9px;
    margin-left: -3px;
    margin-right: -2px;
    font-weight: bold;
}
.c-link.big.last {
    margin-left: -4px;
}
.c-chain {
    width: 5px;
    height: 11px;
    background: #999;
    border-radius: 2px;
    flex: none;
}
.ai-body {
    display: flex;
    height: 267px;
}
.ai-tools {
    width: 24px;
    padding: 0 2px 0 3px;
    display: flex;
    flex-direction: column;
    align-items: center;
    background: #c8c8c8;
    border-left: 2px solid #ddd;
}
.ai-grip {
    width: 100%;
    height: 6px;
    background: #444;
    margin-bottom: 9px;
    flex: none;
}
.at {
    width: 13px;
    height: 12.700px;
    flex: none;
}
.at.sel {
    background: #a9c6e4;
    width: 16px;
    height: 14px;
}
.at-k { fill: #111; }
.at-o { fill: #eee; stroke: #222; stroke-width: 1; }
.at-l { fill: none; stroke: #444; stroke-width: 1.1; }
.at-g { fill: #bbb; stroke: #444; stroke-width: 1; }
.at-t {
    font-family: "Liberation Serif", serif;
    font-size: 13px;
    font-weight: bold;
    line-height: 12px;
    text-align: center;
}
.ai-doc {
    width: 819px;
    display: flex;
    flex-direction: column;
    background: #f4f4f4;
}
.ai-tabbar {
    height: 12px;
    background: #6b6b6b;
    padding-top: 1px;
}
.ai-tab {
    width: 242px;
    height: 11px;
    background: #c0c0c0;
    font-size: 7.300px;
    line-height: 11px;
    padding-left: 6px;
    white-space: nowrap;
    color: #333;
}
.ai-tab i {
    font-style: normal;
    font-size: 6px;
    margin-left: 4px;
}
.ai-hruler {
    height: 12px;
    display: flex;
    background: #fff;
    border-bottom: 1px solid #999;
    flex: none;
}
.hr-pad {
    width: 37px;
    background: repeating-linear-gradient(to right, #666 0 1px, transparent 1px 5.400px) left bottom / 100% 3px no-repeat;
}
.ai-hruler span {
    width: 54.200px;
    border-left: 1px solid #777;
    font-size: 7px;
    line-height: 8px;
    padding-left: 1px;
    color: #333;
    background: repeating-linear-gradient(to right, #666 0 1px, transparent 1px 5.400px) left bottom / 100% 3px no-repeat;
}
.ai-work {
    flex: 1;
    display: flex;
    min-height: 0;
    overflow: hidden;
}
.ai-vruler {
    width: 9px;
    background: #fff repeating-linear-gradient(to bottom, #666 0 1px, transparent 1px 5.400px) right top / 3px 100% no-repeat;
    border-right: 1px solid #999;
    flex: none;
    font-size: 6px;
    line-height: 6px;
    padding-top: 5px;
}
.ai-vruler span {
    display: block;
    height: 54px;
    padding-left: 1px;
}
.ai-canvas {
    display: block;
    flex: none;
    background: #f4f4f4;
}
.ai-page { fill: #fff; stroke: #3c58b8; stroke-width: 1.500; }
.ai-frame { fill: none; stroke: #7a98ff; stroke-width: 1; }
.ai-title {
    font-size: 24px;
    font-weight: bold;
    fill: #16246a;
    stroke: #4d6dff;
    stroke-width: 1;
}
.ai-green { font-size: 7px; fill: #58a858; }
.ai-guide { fill: none; stroke: #7a98ff; stroke-width: 1; }
.ai-dim {
    font-size: 9px;
    font-weight: bold;
    fill: #4d6dff;
    stroke: #4d6dff;
    stroke-width: 1.500;
}
.ai-dim.sm { font-size: 6.500px; stroke-width: 1.200; }
.ai-pts { fill: #4d6dff; }
.txt-ai {
    --tf: #4d6dff;
    --ts: #4d6dff;
    --sw: .9;
    --swx: 1.2;
}
.nodes-ai { fill: #4d6dff; }
.ai-panel {
    width: 147px;
    background: #e4e4e4;
}
.panel-head {
    height: 7px;
    background: #4a4a4a;
}
.panel-tabs {
    height: 12px;
    display: flex;
    background: #9c9c9c;
    font-size: 8px;
    line-height: 12px;
    padding-left: 3px;
    color: #333;
}
.panel-tabs span {
    padding: 0 3px;
}
.panel-tabs .on {
    background: #d8d8d8;
}
.lrow {
    height: 12px;
    display: flex;
    align-items: center;
    padding-left: 4px;
    background: #e4e4e4;
}
.eye {
    width: 8px;
    height: 5px;
    background: #222;
    border-radius: 50%;
    flex: none;
}
.vbox {
    width: 9px;
    height: 10px;
    margin-left: 2px;
    background: #d6d6d6;
    flex: none;
}
.vbar {
    width: 3px;
    height: 10px;
    margin: 0 2px 0 1px;
    background: #4d6dff;
    flex: none;
}
.lcell {
    flex: 1;
    height: 12px;
    display: flex;
    align-items: center;
    padding-left: 19px;
    background: #fff;
    border-bottom: 1px solid #ddd;
    font-size: 7.300px;
    color: #444;
    min-width: 0;
}
.thumb {
    width: 10px;
    height: 10px;
    border: 1px solid #888;
    background: #fff;
    margin-right: 3px;
    flex: none;
    position: relative;
}
.thumb.h::after {
    content: "";
    position: absolute;
    left: 0;
    right: 0;
    top: 3px;
    height: 1px;
    background: #333;
}
.thumb.v::after {
    content: "";
    position: absolute;
    top: 0;
    bottom: 0;
    left: 3px;
    width: 1px;
    background: #555;
}
.tgt {
    width: 7px;
    height: 7px;
    margin-left: auto;
    border: 2px solid #888;
    border-radius: 50%;
    flex: none;
}
.sq {
    width: 5px;
    height: 5px;
    margin: 0 2px;
    background: #2c54e8;
    flex: none;
}
.lrow.top .lcell {
    padding-left: 9px;
    background: #f0f0f0;
    border: 0;
}
.ltop {
    flex: 1;
    height: 12px;
    display: flex;
    align-items: center;
    background: #0a78e0;
    color: #fff;
    font-size: 8.500px;
    font-weight: bold;
    padding-left: 1px;
    letter-spacing: .5px;
}
.thumb.pic {
    background: #b8a890;
    border-color: #444;
}
.tgt.white {
    border-color: #bfe0ff;
}
.sq.white {
    background: #bfe0ff;
}
.ai-lscroll {
    width: 11px;
    background: #efefef;
    padding-top: 19px;
}
.ai-lthumb {
    height: 14px;
    margin-top: 6px;
    background: #d4d4d4;
}
.ai-strip {
    flex: 1;
    background: #6b6b6b;
    padding-top: 7px;
}
.strip-group {
    background: #dadada;
    display: flex;
    flex-direction: column;
    align-items: center;
    padding: 8px 0 6px;
    gap: 4px;
    border-bottom: 1px solid #999;
}
.strip-group svg {
    width: 14px;
    height: 14px;
}
.st-l { fill: none; stroke: #333; stroke-width: 1.1; }
.st-grad { fill: #777; stroke: #444; }
.st-c { fill: #999; stroke: #333; }
.st-c2 { fill: #555; stroke: #333; }
.st-w { fill: #eee; stroke: #333; }
.st-k { fill: #222; }

/* ---------- badges ---------- */
.badge {
    position: absolute;
    left: 0;
    display: flex;
    align-items: center;
}
.badge-cdr { top: 145px; }
.badge-ai { top: 677px; }
.b-logo {
    width: 33px;
    height: 83px;
    overflow: hidden;
    flex: none;
}
.logo-cdr {
    background: #5f9f00;
    border: solid #d4f5a0;
    border-width: 5px 5px 5px 0;
}
.logo-cdr svg {
    display: block;
}
.ray { fill: #a8d060; }
.ray-b { fill: #c4e68a; }
.ray-w { fill: #e8f4d0; }
.logo-ai {
    background: linear-gradient(135deg, #3a1c00, #150800);
    border: solid #fbb040;
    border-width: 5px 5px 5px 0;
    color: #fbb040;
    font-size: 62px;
    font-weight: bold;
    line-height: 72px;
    padding-left: 1px;
}
.b-label {
    width: 129px;
    height: 59px;
    padding: 4px 0 0 16px;
    background: rgba(80, 80, 80, .84);
    color: #fff;
    display: flex;
    flex-direction: column;
}
.b-label strong {
    font-weight: normal;
    font-size: 24px;
    line-height: 26px;
}
.b-label span {
    font-size: 25px;
    line-height: 24px;
    letter-spacing: .5px;
    -webkit-text-stroke: .4px #fff;
}

.watermarks {
    position: absolute;
    left: 0;
    top: 0;
    width: 1024px;
    height: 768px;
    pointer-events: none;
}
.wm-text {
    font-size: 40px;
    font-weight: bold;
    fill: rgba(255, 255, 255, .1);
    stroke: rgba(110, 110, 110, .09);
    stroke-width: 1;
}
```
